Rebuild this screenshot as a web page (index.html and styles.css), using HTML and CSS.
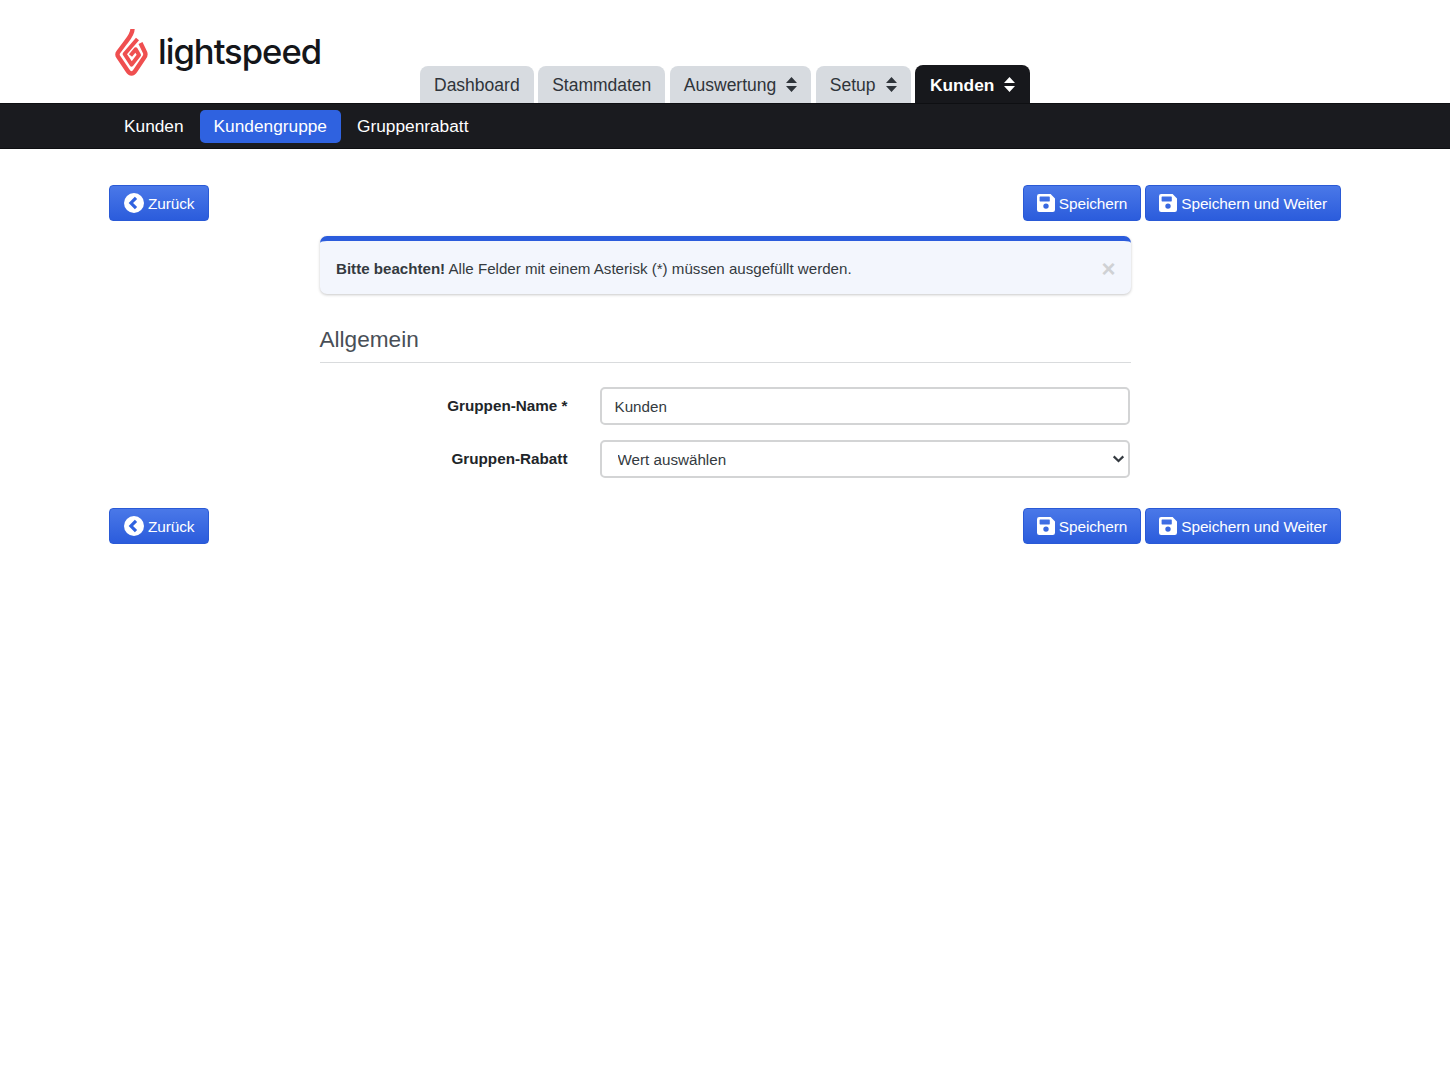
FILE: index.html
```html
<!DOCTYPE html>
<html lang="de">
<head>
<meta charset="utf-8">
<title>Kundengruppe</title>
<link rel="stylesheet" href="styles.css">
</head>
<body>
<svg class="defs" width="0" height="0" aria-hidden="true">
  <symbol id="save" viewBox="0 0 18 18">
    <path fill="#fff" fill-rule="evenodd" d="M2.2 0H13.6L18 4.4V15.8A2.2 2.2 0 0 1 15.8 18H2.2A2.2 2.2 0 0 1 0 15.8V2.2A2.2 2.2 0 0 1 2.2 0ZM3.2 2.6A.6.6 0 0 0 2.6 3.2V6.8A.6.6 0 0 0 3.2 7.4H12.2A.6.6 0 0 0 12.8 6.8V3.2A.6.6 0 0 0 12.2 2.6ZM9 9.4A2.7 2.7 0 1 0 9 14.8A2.7 2.7 0 1 0 9 9.4Z"/>
  </symbol>
  <symbol id="back" viewBox="0 0 20 20">
    <circle cx="10" cy="10" r="10" fill="#fff"/>
    <path d="M12 4.8 6.9 10l5.1 5.2" fill="none" stroke="#2f62e0" stroke-width="3.2"/>
  </symbol>
  <symbol id="sort" viewBox="0 0 11 15">
    <path fill="currentColor" d="M5.5 0 11 6H0ZM0 9H11L5.5 15Z"/>
  </symbol>
</svg>

<header class="top">
  <a class="logo" href="#">
    <svg class="logo-mark" viewBox="0 0 33 48" aria-hidden="true">
      <path fill="none" stroke="#ef4f50" stroke-width="4.4" stroke-linejoin="round" d="M17.5 1 C17.5 6 14 10 10.5 14.5 L3.4 24 C2 25.8 2 27 3.4 29 L12.5 42.5 C15 46.4 18 46.4 20.5 42.5 L29.2 29.5 C31 27 30.8 25.4 29.6 23.5 L25.5 15"/>
      <path fill="none" stroke="#ef4f50" stroke-width="4" stroke-linejoin="round" d="M22.5 11 L9.6 26 L16.6 36.6 L24 27 L20.7 21.3 L15.5 27.5"/>
    </svg>
    <span class="logo-text">lightspeed</span>
  </a>
  <nav class="tabs">
    <a class="tab" href="#">Dashboard</a>
    <a class="tab" href="#">Stammdaten</a>
    <a class="tab" href="#">Auswertung <svg class="sort"><use href="#sort"/></svg></a>
    <a class="tab" href="#">Setup <svg class="sort"><use href="#sort"/></svg></a>
    <a class="tab tab-active" href="#">Kunden <svg class="sort"><use href="#sort"/></svg></a>
  </nav>
</header>

<nav class="subnav">
  <a class="sub" href="#">Kunden</a>
  <a class="sub sub-active" href="#">Kundengruppe</a>
  <a class="sub" href="#">Gruppenrabatt</a>
</nav>

<main class="page">
  <div class="actions">
    <a class="btn btn-back" href="#"><svg class="ico-back"><use href="#back"/></svg>Zurück</a>
    <div class="actions-right">
      <a class="btn btn-save" href="#"><svg class="ico-save"><use href="#save"/></svg>Speichern</a>
      <a class="btn btn-save" href="#"><svg class="ico-save"><use href="#save"/></svg>Speichern und Weiter</a>
    </div>
  </div>

  <div class="column">
    <div class="alert">
      <p class="alert-text"><strong>Bitte beachten!</strong> Alle Felder mit einem Asterisk (*) müssen ausgefüllt werden.</p>
      <span class="alert-close">×</span>
    </div>

    <h2 class="section">Allgemein</h2>

    <form class="form">
      <div class="row">
        <label class="label" for="name">Gruppen-Name *</label>
        <input class="control" id="name" type="text" value="Kunden">
      </div>
      <div class="row">
        <label class="label" for="rabatt">Gruppen-Rabatt</label>
        <div class="select-wrap">
          <select class="control control-select" id="rabatt"><option>Wert auswählen</option></select>
          <svg class="chevron" viewBox="0 0 12 8" aria-hidden="true"><path d="M1.2 1.4 6 6l4.8-4.6" fill="none" stroke="#343a40" stroke-width="2.2"/></svg>
        </div>
      </div>
    </form>
  </div>

  <div class="actions actions-bottom">
    <a class="btn btn-back" href="#"><svg class="ico-back"><use href="#back"/></svg>Zurück</a>
    <div class="actions-right">
      <a class="btn btn-save" href="#"><svg class="ico-save"><use href="#save"/></svg>Speichern</a>
      <a class="btn btn-save" href="#"><svg class="ico-save"><use href="#save"/></svg>Speichern und Weiter</a>
    </div>
  </div>
</main>
</body>
</html>
```
FILE: styles.css
```css
* { box-sizing: border-box; }
html, body { margin: 0; background: #fff; }
body {
  font-family: "Liberation Sans", Arial, sans-serif;
  font-size: 16px;
  color: #212529;
  min-height: 1080px;
}
a { text-decoration: none; color: inherit; }
.defs { position: absolute; }

.top {
  height: 103px;
  display: flex;
  align-items: flex-end;
  padding-left: 115px;
}
.logo {
  align-self: flex-start;
  display: flex;
  align-items: center;
  gap: 10px;
  margin-top: 27px;
  width: 305px;
}
.logo-mark { width: 33px; height: 48px; flex: none; }
.logo-text {
  font-family: Inter, sans-serif;
  font-weight: 500;
  font-size: 34.6px;
  letter-spacing: -1px;
  color: #14161a;
  line-height: 49px;
}
.tabs { display: flex; gap: 4.5px; align-items: flex-end; }
.tab {
  height: 37px;
  background: #d7dbe0;
  border-radius: 8px 8px 0 0;
  padding: 0 14px;
  font-size: 17.5px;
  line-height: 38px;
  color: #2f343a;
  display: flex;
  align-items: center;
  gap: 10px;
  white-space: nowrap;
}
.tab-active {
  height: 38px;
  background: #17181c;
  color: #fff;
  font-weight: 700;
  font-size: 17.3px;
  padding: 1px 15px 0;
}
.sort { width: 11px; height: 15px; flex: none; }

.subnav {
  height: 46px;
  background: #1a1b1f;
  border-top: 1px solid #0e0f12;
  border-bottom: 1px solid #0e0f12;
  display: flex;
  align-items: center;
  gap: 2px;
  padding-left: 110px;
}
.sub {
  height: 33px;
  padding: 0 14px;
  border-radius: 5px;
  color: #fff;
  font-size: 17.3px;
  line-height: 33px;
}
.sub-active { background: #2f62e0; }

.page {
  padding: 36px 109px 0;
}
.actions {
  display: flex;
  justify-content: space-between;
  align-items: center;
}
.actions-bottom { margin-top: 30px; }
.actions-right { display: flex; gap: 4px; }
.btn {
  height: 36px;
  display: flex;
  align-items: center;
  padding: 1px 13px 0;
  border-radius: 4px;
  border: 1px solid #2a5ad6;
  background: linear-gradient(#4a78e8, #2b5cdc);
  color: #fff;
  font-size: 15.4px;
  letter-spacing: -0.1px;
  white-space: nowrap;
}
.btn-back { padding-left: 14px; padding-right: 14px; }
.ico-back { width: 20px; height: 20px; margin: 0 4px 1px 0; flex: none; }
.ico-save { width: 18px; height: 18px; margin: 0 4px 1px 0; flex: none; }

.column { width: 811px; margin: 15px auto 0; }
.alert {
  height: 58px;
  background: #f3f6fd;
  border-top: 5px solid #2b5cdc;
  border-radius: 7px;
  box-shadow: 0 1px 3px rgba(0, 0, 0, .22);
  display: flex;
  align-items: center;
  justify-content: space-between;
  padding: 2px 15px 0 16.5px;
}
.alert-text {
  margin: 0;
  font-size: 15.12px;
  color: #343a40;
}
.alert-close {
  font-size: 24px;
  font-weight: 700;
  color: #cfd1d4;
  line-height: 1;
}
.section {
  margin: 29px 0 0;
  height: 40px;
  font-size: 22.6px;
  font-weight: 400;
  line-height: 33px;
  color: #494f57;
  border-bottom: 1px solid #d9dbdd;
}
.form {
  margin-top: 24px;
  display: flex;
  flex-direction: column;
  gap: 15px;
}
.row {
  display: flex;
  align-items: center;
}
.label {
  width: 248px;
  text-align: right;
  font-weight: 700;
  font-size: 15.25px;
  line-height: 18px;
  color: #212529;
  margin-right: 32px;
  flex: none;
}
.control {
  width: 530px;
  height: 38px;
  border: 2px solid #d3d4d5;
  border-radius: 5px;
  background: #fff;
  font: 15.2px "Liberation Sans", Arial, sans-serif;
  color: #343a40;
  padding: 0 13px;
  display: block;
}
.select-wrap { position: relative; width: 530px; }
.control-select {
  appearance: none;
  -webkit-appearance: none;
  padding-left: 16px;
}
.chevron {
  position: absolute;
  right: 5px;
  top: 15px;
  width: 13px;
  height: 8px;
  pointer-events: none;
}
```
